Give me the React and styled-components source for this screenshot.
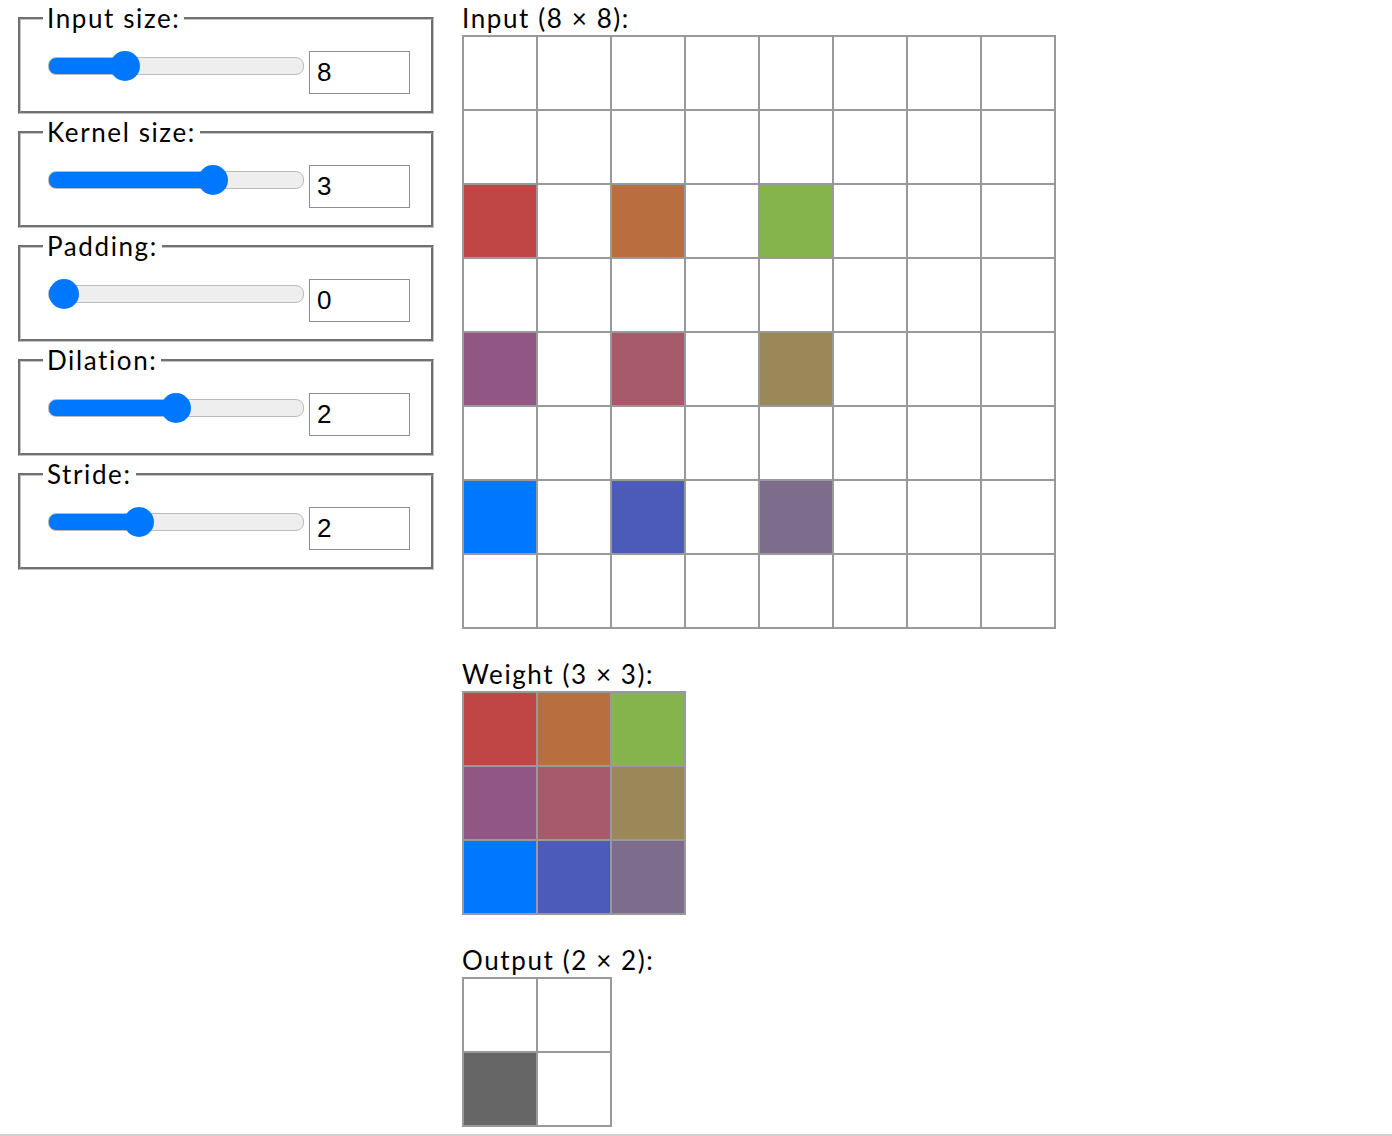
import React from "react";
import styled, { createGlobalStyle } from "styled-components";

const GlobalStyle = createGlobalStyle`
  html, body {
    margin: 0;
    padding: 0;
    background: #fff;
  }
  body {
    font-family: "Lato", "DejaVu Sans", sans-serif;
    color: #000;
  }
`;

const WEIGHT_COLORS = [
  ["#c04646", "#b86e3e", "#86b44c"],
  ["#925684", "#a65a6a", "#9a8858"],
  ["#0077ff", "#4c5ab8", "#7e6c8c"],
];

const CONTROLS = [
  { label: "Input size:", value: 8, min: 2, max: 24 },
  { label: "Kernel size:", value: 3, min: 1, max: 4 },
  { label: "Padding:", value: 0, min: 0, max: 3 },
  { label: "Dilation:", value: 2, min: 1, max: 3 },
  { label: "Stride:", value: 2, min: 1, max: 4 },
];

const inputCells = () => {
  const cells = [];
  for (let r = 0; r < 8; r++) {
    for (let c = 0; c < 8; c++) {
      let color = null;
      if (r >= 2 && r <= 6 && c <= 4 && r % 2 === 0 && c % 2 === 0) {
        color = WEIGHT_COLORS[(r - 2) / 2][c / 2];
      }
      cells.push(color);
    }
  }
  return cells;
};

const Control = ({ label, value, min, max }) => {
  // thumb is 30px wide on a 254px content track, fill runs to its centre
  const ratio = (value - min) / (max - min);
  const fill = ((15 + ratio * 224) / 254) * 100;
  return (
    <Fieldset>
      <Legend>{label}</Legend>
      <ControlRow>
        <Slider
          type="range"
          min={min}
          max={max}
          defaultValue={value}
          style={{ "--fill": `${fill}%` }}
        />
        <NumberBox type="number" defaultValue={value} />
      </ControlRow>
    </Fieldset>
  );
};

const Matrix = ({ title, size, cells }) => (
  <Section>
    <Label>{title}</Label>
    <Grid $size={size}>
      {cells.map((color, i) => (
        <Cell key={i} $color={color} />
      ))}
    </Grid>
  </Section>
);

const App = () => {
  const weight = WEIGHT_COLORS.flat();
  const output = [null, null, "#666666", null];
  return (
    <>
      <GlobalStyle />
      <Page>
        <Controls>
          {CONTROLS.map((c) => (
            <Control key={c.label} {...c} />
          ))}
        </Controls>
        <Matrices>
          <Matrix title="Input (8 × 8):" size={8} cells={inputCells()} />
          <Matrix title="Weight (3 × 3):" size={3} cells={weight} />
          <Matrix title="Output (2 × 2):" size={2} cells={output} />
        </Matrices>
      </Page>
      <Rule />
    </>
  );
};

export default App;

const Page = styled.div`
  display: flex;
  align-items: flex-start;
  gap: 28px;
  padding: 4px 0 0 18px;
`;

const Controls = styled.div`
  width: 416px;
  flex-shrink: 0;
  display: flex;
  flex-direction: column;
  gap: 4px;
`;

const Fieldset = styled.fieldset`
  margin: 0;
  padding: 0 21px 17px 27px;
  border: 3px groove #c4c4c4;
  min-width: 0;
`;

const Legend = styled.legend`
  margin-left: -5px;
  padding: 0 4px;
  font-size: 26px;
  line-height: 28px;
  letter-spacing: 1.6px;
`;

const ControlRow = styled.div`
  display: flex;
  align-items: flex-start;
  gap: 5px;
  margin-top: 19px;
`;

const Slider = styled.input`
  -webkit-appearance: none;
  appearance: none;
  width: 256px;
  height: 16px;
  margin: 6px 0 0;
  border: 1px solid #bbb;
  border-radius: 8px;
  background: linear-gradient(
    to right,
    #0077ff 0,
    #0077ff var(--fill),
    #eeeeee var(--fill),
    #eeeeee 100%
  );
  outline: none;

  &::-webkit-slider-thumb {
    -webkit-appearance: none;
    appearance: none;
    width: 30px;
    height: 30px;
    border-radius: 50%;
    background: #0077ff;
    border: none;
  }
`;

const NumberBox = styled.input`
  box-sizing: border-box;
  width: 101px;
  height: 43px;
  margin: 0;
  padding: 0 7px;
  border: 1px solid #8f8f8f;
  font-family: "Liberation Sans", Arial, sans-serif;
  font-size: 26px;
  color: #000;
  -moz-appearance: textfield;

  &::-webkit-outer-spin-button,
  &::-webkit-inner-spin-button {
    -webkit-appearance: none;
    margin: 0;
  }
`;

const Matrices = styled.div`
  display: flex;
  flex-direction: column;
  gap: 31px;
`;

const Section = styled.div`
  display: flex;
  flex-direction: column;
  align-items: flex-start;
`;

const Label = styled.div`
  font-size: 26px;
  line-height: 28px;
  letter-spacing: 1.6px;
  margin-bottom: 3px;
`;

const Grid = styled.div`
  display: grid;
  grid-template-columns: repeat(${(p) => p.$size}, 72px);
  grid-auto-rows: 72px;
  gap: 2px;
  padding: 2px;
  background: #999;
`;

const Cell = styled.div`
  background: ${(p) => p.$color || "#fff"};
`;

const Rule = styled.div`
  margin-top: 7px;
  border-top: 2px solid #d0d0d0;
`;
